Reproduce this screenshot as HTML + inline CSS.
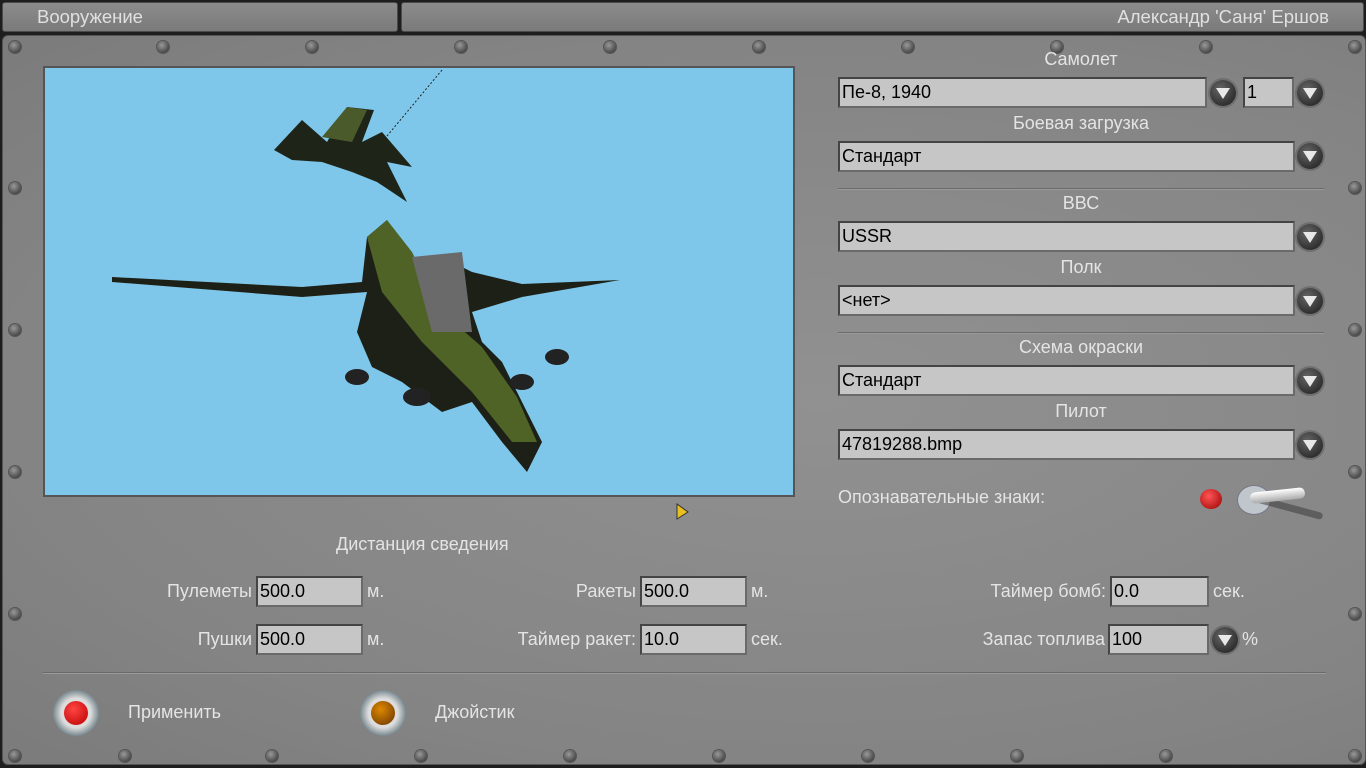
<!DOCTYPE html>
<html><head><meta charset="utf-8"><style>
*{margin:0;padding:0;box-sizing:border-box}
body{width:1366px;height:768px;overflow:hidden;background:#1e1e1e;font-family:"Liberation Sans",sans-serif;position:relative}
.bar{position:absolute;top:2px;height:30px;background:linear-gradient(#8c8c8c,#7a7a7a);border:1px solid #4a4a4a;border-radius:3px;color:#e0e0e0;font-size:18.5px;line-height:28px}
#panel{position:absolute;left:2px;top:35px;width:1364px;height:730px;background:radial-gradient(ellipse at 60% 50%,#919191,#848484 70%,#7b7b7b);border-radius:6px;border:1px solid #555}
.t{position:absolute;color:#e4e4e4;font-size:18px;white-space:nowrap}
.r{text-align:right}
.c{text-align:center}
.in{position:absolute;height:31px;background:#c6c6c6;border:2px solid #444;border-right-color:#6a6a6a;border-bottom-color:#6a6a6a;color:#000;font-size:18px;line-height:27px;padding-left:2px}
.dd{position:absolute;width:26px;height:26px;border-radius:50%;background:radial-gradient(circle at 40% 35%,#666,#1a1a1a);box-shadow:0 0 0 2px #6f6f6f}
.dd:after{content:"";position:absolute;left:6px;top:8px;border-left:7px solid transparent;border-right:7px solid transparent;border-top:11px solid #e8e8e8}
.sc{position:absolute;width:12px;height:12px;border-radius:50%;background:radial-gradient(circle at 40% 35%,#999,#2a2a2a);box-shadow:0 0 0 1px #555}
.hr{position:absolute;height:2px;background:#6a6a6a;border-bottom:1px solid #9a9a9a}
.btn{position:absolute;width:46px;height:46px;border-radius:50%;background:radial-gradient(circle,#ddd 45%,#7a8a90 70%,#555 100%)}
.btn i{position:absolute;left:11px;top:11px;width:24px;height:24px;border-radius:50%}
</style></head><body>
<div class="bar" style="left:2px;width:396px;padding-left:34px">Вооружение</div>
<div class="bar" style="left:401px;width:963px;text-align:right;padding-right:34px">Александр 'Саня' Ершов</div>
<div id="panel"></div>
<div class="sc" style="left:9px;top:41px"></div><div class="sc" style="left:157px;top:41px"></div><div class="sc" style="left:306px;top:41px"></div><div class="sc" style="left:455px;top:41px"></div><div class="sc" style="left:604px;top:41px"></div><div class="sc" style="left:753px;top:41px"></div><div class="sc" style="left:902px;top:41px"></div><div class="sc" style="left:1051px;top:41px"></div><div class="sc" style="left:1200px;top:41px"></div><div class="sc" style="left:1349px;top:41px"></div>
<div class="sc" style="left:9px;top:750px"></div><div class="sc" style="left:119px;top:750px"></div><div class="sc" style="left:266px;top:750px"></div><div class="sc" style="left:415px;top:750px"></div><div class="sc" style="left:564px;top:750px"></div><div class="sc" style="left:713px;top:750px"></div><div class="sc" style="left:862px;top:750px"></div><div class="sc" style="left:1011px;top:750px"></div><div class="sc" style="left:1160px;top:750px"></div><div class="sc" style="left:1349px;top:750px"></div>
<div class="sc" style="left:9px;top:182px"></div><div class="sc" style="left:9px;top:324px"></div><div class="sc" style="left:9px;top:466px"></div><div class="sc" style="left:9px;top:608px"></div>
<div class="sc" style="left:1349px;top:182px"></div><div class="sc" style="left:1349px;top:324px"></div><div class="sc" style="left:1349px;top:466px"></div><div class="sc" style="left:1349px;top:608px"></div>
<div style="position:absolute;left:43px;top:66px;width:752px;height:431px;background:#7fc7ea;border:2px solid #555;overflow:hidden">
<svg width="752" height="431" viewBox="43 66 752 431">
<line x1="440" y1="68" x2="380" y2="140" stroke="#222" stroke-dasharray="2,2"/>
<path d="M272 148 L300 118 L325 140 L345 105 L372 108 L360 140 L380 130 L410 165 L385 160 L405 200 L375 180 L350 170 L320 160 L290 158Z" fill="#1f2418"/>
<path d="M320 135 L345 105 L365 108 L350 140Z" fill="#4b5a2a"/>
<path d="M110 275 L300 285 L360 280 L365 235 L385 218 L400 260 L440 255 L470 270 L520 282 L618 278 L520 295 L470 310 L480 340 L500 360 L520 400 L540 440 L525 470 L500 440 L470 400 L440 410 L400 380 L370 365 L355 330 L365 290 L300 295 L110 280Z" fill="#1c2016"/>
<path d="M365 235 L385 218 L410 250 L440 310 L480 345 L515 395 L535 440 L510 440 L470 390 L420 340 L380 290Z" fill="#4f6326"/>
<path d="M410 255 L460 250 L470 330 L430 330Z" fill="#6a6a6a"/>
<ellipse cx="355" cy="375" rx="12" ry="8" fill="#222"/><ellipse cx="415" cy="395" rx="14" ry="9" fill="#222"/><ellipse cx="520" cy="380" rx="12" ry="8" fill="#222"/><ellipse cx="555" cy="355" rx="12" ry="8" fill="#222"/>
</svg></div>
<div class="t c" style="left:838px;width:486px;top:49px">Самолет</div>
<div class="in" style="left:838px;top:77px;width:369px">Пе-8, 1940</div><div class="dd" style="left:1210px;top:80px"></div>
<div class="in" style="left:1243px;top:77px;width:51px">1</div><div class="dd" style="left:1297px;top:80px"></div>
<div class="t c" style="left:838px;width:486px;top:113px">Боевая загрузка</div>
<div class="in" style="left:838px;top:141px;width:457px">Стандарт</div><div class="dd" style="left:1297px;top:143px"></div>
<div class="hr" style="left:838px;top:188px;width:486px"></div>
<div class="t c" style="left:838px;width:486px;top:193px">ВВС</div>
<div class="in" style="left:838px;top:221px;width:457px">USSR</div><div class="dd" style="left:1297px;top:224px"></div>
<div class="t c" style="left:838px;width:486px;top:257px">Полк</div>
<div class="in" style="left:838px;top:285px;width:457px">&lt;нет&gt;</div><div class="dd" style="left:1297px;top:288px"></div>
<div class="hr" style="left:838px;top:332px;width:486px"></div>
<div class="t c" style="left:838px;width:486px;top:337px">Схема окраски</div>
<div class="in" style="left:838px;top:365px;width:457px">Стандарт</div><div class="dd" style="left:1297px;top:368px"></div>
<div class="t c" style="left:838px;width:486px;top:401px">Пилот</div>
<div class="in" style="left:838px;top:429px;width:457px">47819288.bmp</div><div class="dd" style="left:1297px;top:432px"></div>
<div class="t" style="left:838px;top:487px">Опознавательные знаки:</div>
<div style="position:absolute;left:1200px;top:489px;width:22px;height:20px;border-radius:50%;background:radial-gradient(circle at 40% 35%,#f55,#900)"></div>
<div style="position:absolute;left:1237px;top:485px;width:34px;height:30px;border-radius:50%;background:#bfc7cc;border:1px solid #778"></div>
<div style="position:absolute;left:1255px;top:495px;width:70px;height:7px;background:#333;transform:rotate(15deg);transform-origin:left;opacity:.5;border-radius:4px"></div>
<div style="position:absolute;left:1250px;top:490px;width:55px;height:11px;background:linear-gradient(#fff,#aaa);border-radius:5px;transform:rotate(-6deg)"></div>
<div class="t" style="left:336px;top:534px">Дистанция сведения</div>
<div class="t r" style="left:100px;width:152px;top:581px">Пулеметы</div><div class="in" style="left:256px;top:576px;width:107px">500.0</div><div class="t" style="left:367px;top:581px">м.</div>
<div class="t r" style="left:100px;width:152px;top:629px">Пушки</div><div class="in" style="left:256px;top:624px;width:107px">500.0</div><div class="t" style="left:367px;top:629px">м.</div>
<div class="t r" style="left:436px;width:200px;top:581px">Ракеты</div><div class="in" style="left:640px;top:576px;width:107px">500.0</div><div class="t" style="left:751px;top:581px">м.</div>
<div class="t r" style="left:436px;width:200px;top:629px">Таймер ракет:</div><div class="in" style="left:640px;top:624px;width:107px">10.0</div><div class="t" style="left:751px;top:629px">сек.</div>
<div class="t r" style="left:900px;width:206px;top:581px">Таймер бомб:</div><div class="in" style="left:1110px;top:576px;width:99px">0.0</div><div class="t" style="left:1213px;top:581px">сек.</div>
<div class="t r" style="left:900px;width:205px;top:629px">Запас топлива</div><div class="in" style="left:1108px;top:624px;width:101px">100</div><div class="dd" style="left:1212px;top:627px"></div><div class="t" style="left:1242px;top:629px">%</div>
<div class="hr" style="left:43px;top:672px;width:1283px"></div>
<div class="btn" style="left:53px;top:690px"><i style="background:radial-gradient(circle at 40% 35%,#f44,#b00)"></i></div>
<div class="t" style="left:128px;top:702px">Применить</div>
<div class="btn" style="left:360px;top:690px"><i style="background:radial-gradient(circle at 40% 35%,#d80,#630)"></i></div>
<div class="t" style="left:435px;top:702px">Джойстик</div>
<svg style="position:absolute;left:676px;top:503px" width="14" height="18"><path d="M1 1 L1 16 L12 9Z" fill="#e8c020" stroke="#333"/></svg>
</body></html>
